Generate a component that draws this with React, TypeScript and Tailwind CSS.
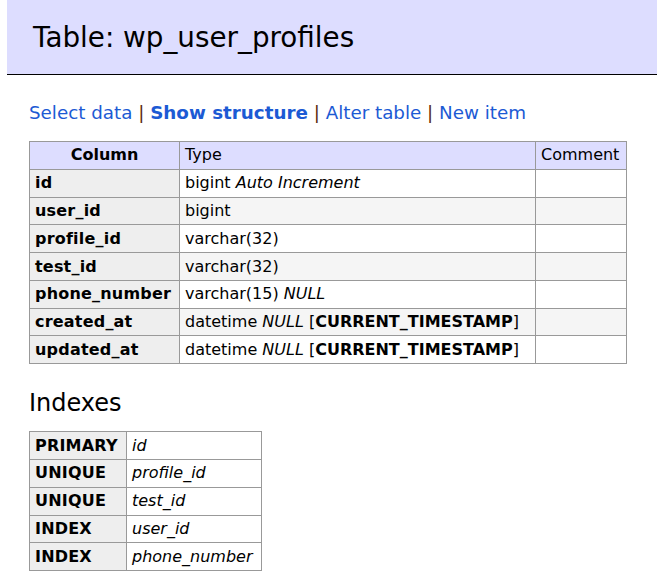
import React from "react";

const columns = [
    { name: "id", type: "bigint", extra: <i>Auto Increment</i> },
    { name: "user_id", type: "bigint" },
    { name: "profile_id", type: "varchar(32)" },
    { name: "test_id", type: "varchar(32)" },
    { name: "phone_number", type: "varchar(15)", extra: <i>NULL</i> },
    {
        name: "created_at",
        type: "datetime",
        extra: (
            <>
                <i>NULL</i> [<b>CURRENT_TIMESTAMP</b>]
            </>
        ),
    },
    {
        name: "updated_at",
        type: "datetime",
        extra: (
            <>
                <i>NULL</i> [<b>CURRENT_TIMESTAMP</b>]
            </>
        ),
    },
];

const indexes = [
    { kind: "PRIMARY", col: "id" },
    { kind: "UNIQUE", col: "profile_id" },
    { kind: "UNIQUE", col: "test_id" },
    { kind: "INDEX", col: "user_id" },
    { kind: "INDEX", col: "phone_number" },
];

const cell = "border border-[#999] px-[5px] py-[3.4px] leading-[20px] align-top";

export default function App() {
    return (
        <div className="min-h-[583px] bg-white pl-[29px] text-black font-['DejaVu_Sans',sans-serif] text-[16px]">
            {/* Title bar */}
            <h2 className="-ml-[22px] h-[75px] border-b border-black bg-[#ddf] pl-[26px] pt-[23px] text-[27.8px] leading-[30px] font-normal">
                Table: wp_user_profiles
            </h2>

            {/* Links */}
            <p className="mt-[27px] text-[18.3px] leading-[22px]">
                <a className="text-[#1c5ad4]">Select data</a>
                <span className="text-[#5a2a0a]"> | </span>
                <a className="text-[#1c5ad4] font-bold">Show structure</a>
                <span className="text-[#5a2a0a]"> | </span>
                <a className="text-[#1c5ad4]">Alter table</a>
                <span className="text-[#5a2a0a]"> | </span>
                <a className="text-[#1c5ad4]">New item</a>
            </p>

            {/* Columns table */}
            <table className="mt-[17px] border-collapse">
                <thead>
                    <tr className="bg-[#ddf]">
                        <th className={`${cell} w-[150px] text-center font-bold`}>Column</th>
                        <td className={`${cell} w-[356px] text-left`}>Type</td>
                        <td className={`${cell} w-[91px] text-left`}>Comment</td>
                    </tr>
                </thead>
                <tbody>
                    {columns.map((c, i) => (
                        <tr key={c.name}>
                            <th className={`${cell} text-left bg-[#eee] font-bold tracking-[0.2px]`}>{c.name}</th>
                            <td className={`${cell} text-left ${i % 2 ? "bg-[#f5f5f5]" : "bg-white"}`}>
                                {c.type}
                                {c.extra && <> {c.extra}</>}
                            </td>
                            <td className={`${cell} ${i % 2 ? "bg-[#f5f5f5]" : "bg-white"}`}></td>
                        </tr>
                    ))}
                </tbody>
            </table>

            {/* Indexes */}
            <h3 className="mt-[24px] text-[24px] leading-[30px] font-normal">Indexes</h3>
            <table className="mt-[13px] border-collapse">
                <tbody>
                    {indexes.map((x, i) => (
                        <tr key={i}>
                            <th className={`${cell} w-[97px] text-left bg-[#eee] font-bold tracking-[0.2px]`}>{x.kind}</th>
                            <td className={`${cell} w-[135px] text-left bg-white italic`}>{x.col}</td>
                        </tr>
                    ))}
                </tbody>
            </table>
        </div>
    );
}
